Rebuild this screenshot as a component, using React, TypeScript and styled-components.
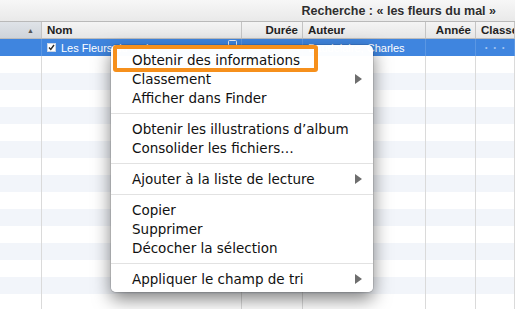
import React from "react";
import styled, { createGlobalStyle } from "styled-components";

const Global = createGlobalStyle`
  html, body { margin: 0; padding: 0; background: #fff; overflow: hidden; }
  #root { width: 515px; height: 309px; }
`;

const COLS = "42px 200px 61px 123px 50px 1fr";

const Page = styled.div`
  position: relative;
  width: 515px;
  height: 309px;
  overflow: hidden;
  font-family: "Liberation Sans", Arial, sans-serif;
  background: #fff;
`;

const Toolbar = styled.div`
  height: 22px;
  box-sizing: border-box;
  display: flex;
  align-items: center;
  justify-content: flex-end;
  padding-right: 19px;
  background: linear-gradient(#f7f7f7, #e9e9e9);
  border-bottom: 1px solid #b9b9b9;
`;

const Title = styled.div`
  font-size: 12.5px;
  font-weight: bold;
  color: #2e2e2e;
  text-shadow: 0 1px 0 rgba(255, 255, 255, 0.8);
  white-space: nowrap;
`;

const HeaderRow = styled.div`
  display: grid;
  grid-template-columns: ${COLS};
  height: 17px;
  box-sizing: border-box;
  border-bottom: 1px solid #bcbcbc;
  background: linear-gradient(#f4f4f4, #e6e6e6);
`;

const HeadCell = styled.div<{ $align?: string; $sorted?: boolean }>`
  display: flex;
  align-items: center;
  justify-content: ${(p) => p.$align || "flex-start"};
  padding: 0 4px 0 5px;
  box-sizing: border-box;
  border-right: 1px solid #c4c4c4;
  font-size: 11.5px;
  font-weight: bold;
  color: #222;
  white-space: nowrap;
  overflow: hidden;
  background: ${(p) => (p.$sorted ? "linear-gradient(#dfe3e8, #cfd4da)" : "transparent")};
`;

const SortArrow = styled.span`
  font-size: 7px;
  color: #555;
  margin-right: 3px;
`;

const Row = styled.div<{ $selected?: boolean; $stripe?: boolean }>`
  display: grid;
  grid-template-columns: ${COLS};
  height: 17px;
  background: ${(p) => (p.$selected ? "#3f85df" : p.$stripe ? "#f2f5fa" : "#fff")};
  color: ${(p) => (p.$selected ? "#fff" : "#000")};
`;

const Cell = styled.div<{ $selected?: boolean }>`
  display: flex;
  align-items: center;
  gap: 5px;
  padding: 0 5px;
  box-sizing: border-box;
  border-right: 1px solid ${(p) => (p.$selected ? "rgba(255,255,255,0.15)" : "#dadada")};
  font-size: 11px;
  white-space: nowrap;
  overflow: hidden;
  position: relative;
`;

const Dots = styled.span`
  font-size: 7px;
  letter-spacing: 6px;
  color: rgba(255, 255, 255, 0.55);
  padding-left: 4px;
`;

const Menu = styled.div`
  position: absolute;
  left: 111px;
  top: 45px;
  width: 262px;
  box-sizing: border-box;
  padding: 5px 0 4px;
  background: rgba(255, 255, 255, 0.98);
  border-radius: 5px;
  box-shadow: 0 0 0 1px rgba(0, 0, 0, 0.1), 0 7px 18px rgba(0, 0, 0, 0.5);
  font-family: "DejaVu Sans", sans-serif;
  font-size: 13.5px;
  color: #111;
`;

const Item = styled.div`
  height: 19px;
  display: flex;
  align-items: center;
  justify-content: space-between;
  padding: 0 11px 0 21px;
  white-space: nowrap;
`;

const Separator = styled.div`
  height: 12px;
  display: flex;
  align-items: center;
  &::after {
    content: "";
    flex: 1;
    height: 1px;
    background: #e2e2e2;
  }
`;

const Callout = styled.div`
  position: absolute;
  left: 2px;
  top: 0;
  width: 205px;
  height: 27px;
  box-sizing: border-box;
  border: 4px solid #f6901c;
  border-radius: 3px;
  pointer-events: none;
`;

const Arrow = () => (
  <svg width="7" height="10" viewBox="0 0 7 10">
    <polygon points="0,0 7,5 0,10" fill="#6e6e6e" />
  </svg>
);

const Check = () => (
  <svg width="9" height="9" viewBox="0 0 9 9" style={{ flex: "none" }}>
    <rect x="0.5" y="0.5" width="8" height="8" fill="#fff" stroke="#c8d4e6" />
    <path d="M2 4.5 L3.8 6.5 L7 2" fill="none" stroke="#2a2a2a" strokeWidth="1.4" />
  </svg>
);

const SmallBox = () => (
  <svg width="9" height="8" viewBox="0 0 9 8" style={{ position: "absolute", right: 4, top: 1 }}>
    <rect x="0.5" y="0.5" width="8" height="7" rx="1" fill="none" stroke="#e9eef7" />
  </svg>
);

type MenuEntry = { label?: string; sub?: boolean; sep?: boolean };

const menu: MenuEntry[] = [
  { label: "Obtenir des informations" },
  { label: "Classement", sub: true },
  { label: "Afficher dans Finder" },
  { sep: true },
  { label: "Obtenir les illustrations d’album" },
  { label: "Consolider les fichiers…" },
  { sep: true },
  { label: "Ajouter à la liste de lecture", sub: true },
  { sep: true },
  { label: "Copier" },
  { label: "Supprimer" },
  { label: "Décocher la sélection" },
  { sep: true },
  { label: "Appliquer le champ de tri", sub: true },
];

export default function App() {
  const empty = Array.from({ length: 15 }, (_, i) => i);
  return (
    <Page>
      <Global />
      <Toolbar>
        <Title>Recherche : « les fleurs du mal »</Title>
      </Toolbar>
      <HeaderRow>
        <HeadCell $sorted $align="flex-end">
          <SortArrow>▲</SortArrow>
        </HeadCell>
        <HeadCell>Nom</HeadCell>
        <HeadCell $align="flex-end">Durée</HeadCell>
        <HeadCell>Auteur</HeadCell>
        <HeadCell $align="flex-end">Année</HeadCell>
        <HeadCell>Classe</HeadCell>
      </HeaderRow>
      <Row $selected>
        <Cell $selected />
        <Cell $selected>
          <Check />
          Les Fleurs du mal
          <SmallBox />
        </Cell>
        <Cell $selected />
        <Cell $selected>Baudelaire, Charles</Cell>
        <Cell $selected />
        <Cell $selected>
          <Dots>•••</Dots>
        </Cell>
      </Row>
      {empty.map((i) => (
        <Row key={i} $stripe={i % 2 === 1}>
          <Cell />
          <Cell />
          <Cell />
          <Cell />
          <Cell />
          <Cell />
        </Row>
      ))}
      <Menu>
        {menu.map((m, i) =>
          m.sep ? (
            <Separator key={i} />
          ) : (
            <Item key={i}>
              <span>{m.label}</span>
              {m.sub && <Arrow />}
            </Item>
          )
        )}
        <Callout />
      </Menu>
    </Page>
  );
}
